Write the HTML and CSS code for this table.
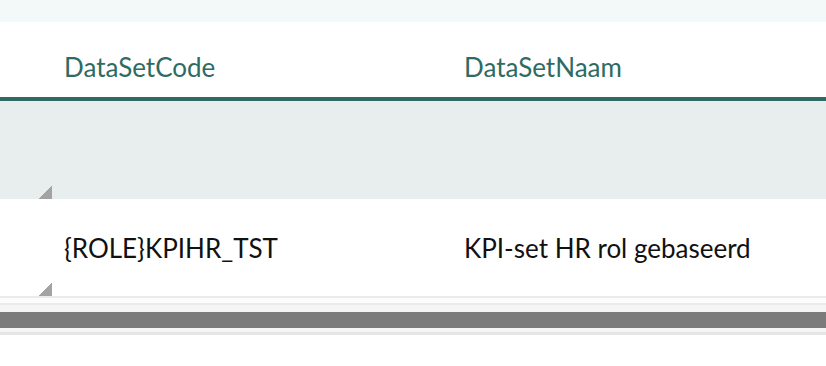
FILE: index.html
```html
<!DOCTYPE html>
<html lang="nl">
<head>
<meta charset="utf-8">
<title>DataSets</title>
<link rel="stylesheet" href="styles.css">
</head>
<body>
<div class="page">
  <div class="topband"></div>
  <div class="grid">
    <div class="row header">
      <div class="cell">DataSetCode</div>
      <div class="cell">DataSetNaam</div>
    </div>
    <div class="row filter">
      <span class="resize"></span>
    </div>
    <div class="row data">
      <div class="cell">{ROLE}KPIHR_TST</div>
      <div class="cell">KPI-set HR rol gebaseerd</div>
      <span class="resize"></span>
    </div>
  </div>
  <div class="scrollbar">
    <div class="sb-line"></div>
    <div class="sb-gap"></div>
    <div class="sb-line thin"></div>
    <div class="sb-track">
      <div class="sb-thumb"></div>
    </div>
    <div class="sb-line bottom"></div>
  </div>
</div>
</body>
</html>
```

FILE: styles.css
```css
html, body {
  margin: 0;
  padding: 0;
  background: #ffffff;
}

body {
  font-family: "Lato", "Liberation Sans", sans-serif;
  font-size: 26px;
  color: #111111;
}

.page {
  width: 826px;
  height: 366px;
  overflow: hidden;
}

.topband {
  height: 22px;
  background: #f3f8f8;
}

.row {
  position: relative;
  display: grid;
  grid-template-columns: 400px 1fr;
  padding-left: 64px;
  box-sizing: border-box;
  line-height: 30px;
}

.header {
  height: 79px;
  align-items: end;
  padding-bottom: 15px;
  color: #2e6b62;
  border-bottom: 4px solid #2f6b62;
}

.filter {
  height: 98px;
  background: #e8eeee;
}

.data {
  height: 97px;
  align-items: center;
  background: #ffffff;
}

.cell {
  white-space: nowrap;
}

.resize {
  position: absolute;
  left: 38px;
  bottom: 0;
  width: 14px;
  height: 14px;
  background: linear-gradient(to top left, #a3a3a3 50%, transparent 50%);
}

.scrollbar {
  display: flex;
  flex-direction: column;
}

.sb-line {
  height: 2px;
  background: #ebebeb;
}

.sb-line.thin {
  height: 2px;
}

.sb-line.bottom {
  height: 3px;
  background: #e6e6e6;
}

.sb-gap {
  height: 5px;
  background: #fcfcfc;
}

.sb-track {
  padding: 7px 0 4px;
  background: #f5f5f5;
}

.sb-thumb {
  height: 16px;
  background: #7b7b7b;
}
```
